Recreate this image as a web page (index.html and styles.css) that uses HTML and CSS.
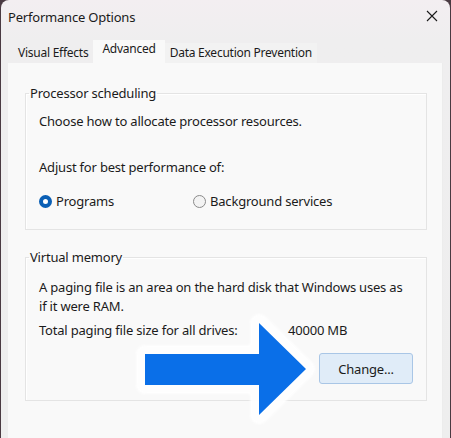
FILE: index.html
```html
<!DOCTYPE html>
<html>
<head>
<meta charset="utf-8">
<link rel="stylesheet" href="styles.css">
</head>
<body>
<div class="window">
  <div class="titlebar">
    <span class="title">Performance Options</span>
    <svg class="close" width="12" height="12" viewBox="0 0 12 12"><path d="M1 1L11 11M11 1L1 11" stroke="#1a1a1a" stroke-width="1.1" fill="none"/></svg>
  </div>
  <div class="tabs">
    <div class="tab">Visual Effects</div>
    <div class="tab active">Advanced</div>
    <div class="tab">Data Execution Prevention</div>
  </div>
  <div class="panel">
    <fieldset class="group group-proc">
      <legend>Processor scheduling</legend>
      <div class="group-body">
        <p class="line">Choose how to allocate processor resources.</p>
        <p class="line adjust">Adjust for best performance of:</p>
        <div class="radios">
          <label class="radio"><span class="dot checked"></span>Programs</label>
          <label class="radio second"><span class="dot"></span>Background services</label>
        </div>
      </div>
    </fieldset>
    <fieldset class="group group-vm">
      <legend>Virtual memory</legend>
      <div class="group-body">
        <p class="line">A paging file is an area on the hard disk that Windows uses as<br>if it were RAM.</p>
        <div class="size-row">
          <span class="size-label">Total paging file size for all drives:</span>
          <span class="size-value">40000 MB</span>
        </div>
        <div class="btn-row">
          <button class="btn">Change...</button>
        </div>
      </div>
    </fieldset>
  </div>
  <svg class="arrow" width="200" height="130" viewBox="0 0 200 130">
    <defs>
      <filter id="glow" x="-20%" y="-20%" width="140%" height="140%">
        <feGaussianBlur stdDeviation="1.2"/>
      </filter>
    </defs>
    <path d="M15 42H129V11L176 57L129 103V73H15Z" fill="#ffffff" stroke="#ffffff" stroke-width="18" stroke-linejoin="round" filter="url(#glow)" opacity="0.95"/>
    <path d="M15 42H129V11L176 57L129 103V73H15Z" fill="#0a6fe8"/>
  </svg>
</div>
</body>
</html>
```
FILE: styles.css
```css
html, body {
  margin: 0;
  padding: 0;
}
body {
  background: #4a3a42;
  width: 451px;
  height: 438px;
  overflow: hidden;
  font-family: "Noto Sans", "Open Sans", sans-serif;
  font-size: 13px;
  letter-spacing: -0.2px;
  color: #1b1b1b;
}
.window {
  position: relative;
  margin-left: 1px;
  width: 449px;
  height: 450px;
  border-radius: 8px 8px 0 0;
  background: linear-gradient(180deg, #f3eef1 0px, #efeeef 40px, #eeeeee 100%);
  display: flex;
  flex-direction: column;
}
.titlebar {
  height: 36px;
  display: flex;
  align-items: center;
  justify-content: space-between;
  padding: 0 12px 0 7px;
}
.title {
  font-size: 13px;
  margin-top: -3px;
}
.close {
  margin-top: -5px;
}
.tabs {
  display: flex;
  align-items: flex-end;
  height: 27px;
  padding-left: 9px;
}
.tab {
  height: 20px;
  line-height: 20px;
  padding: 0 6px 0 8px;
  font-size: 12px;
  letter-spacing: -0.25px;
}
.tab.active {
  height: 23px;
  background: #f9f9f9;
  line-height: 18px;
  padding: 0 9px 0 9px;
  margin-left: -1px;
}
.tab:last-child {
  background: #f2f2f2;
  padding: 0 5px 0 5px;
}
.panel {
  flex: 1;
  margin: 0 7px 0 7px;
  background: #f9f9f9;
  border-right: 1px solid #ececec;
  padding: 21px 15px 0 17px;
  display: flex;
  flex-direction: column;
}
.group {
  margin: 0;
  padding: 0;
  border: 1px solid #e4e4e4;
  box-shadow: inset 1px 1px 0 #ffffff;
  min-width: 0;
}
.group legend {
  padding: 0 1px;
  margin-left: 3px;
  line-height: 18px;
}
.group-vm {
  margin-top: 18px;
}
.group-body {
  padding: 0 0 0 13px;
}
.line {
  margin: 0;
  line-height: 19px;
}
.group-proc .line:first-child {
  margin-top: 10px;
}
.adjust {
  margin-top: 27px !important;
}
.radios {
  display: flex;
  margin-top: 15px;
  height: 37px;
}
.radio {
  display: flex;
  align-items: flex-start;
  gap: 4px;
  line-height: 19px;
}
.radio.second {
  margin-left: 79px;
}
.dot {
  width: 11px;
  height: 11px;
  border-radius: 50%;
  border: 1px solid #8a8a8a;
  background: #f3f3f3;
  margin-top: 3px;
  flex: none;
}
.dot.checked {
  width: 5px;
  height: 5px;
  border: 4px solid #0a5fb5;
  background: #ffffff;
}
.group-vm .line:first-child {
  margin-top: 12px;
}
.size-row {
  display: flex;
  margin-top: 5px;
  line-height: 19px;
}
.size-label {
  width: 249px;
}
.btn-row {
  display: flex;
  justify-content: flex-end;
  margin-top: 13px;
  padding-right: 13px;
  padding-bottom: 16px;
}
.btn {
  width: 94px;
  height: 31px;
  font-family: inherit;
  font-size: 13px;
  letter-spacing: -0.2px;
  color: #1b1b1b;
  background: #e0ecf8;
  border: 1px solid #a9c6e6;
  border-radius: 3px;
  padding: 0;
}
.arrow {
  position: absolute;
  left: 129px;
  top: 312px;
}
```
